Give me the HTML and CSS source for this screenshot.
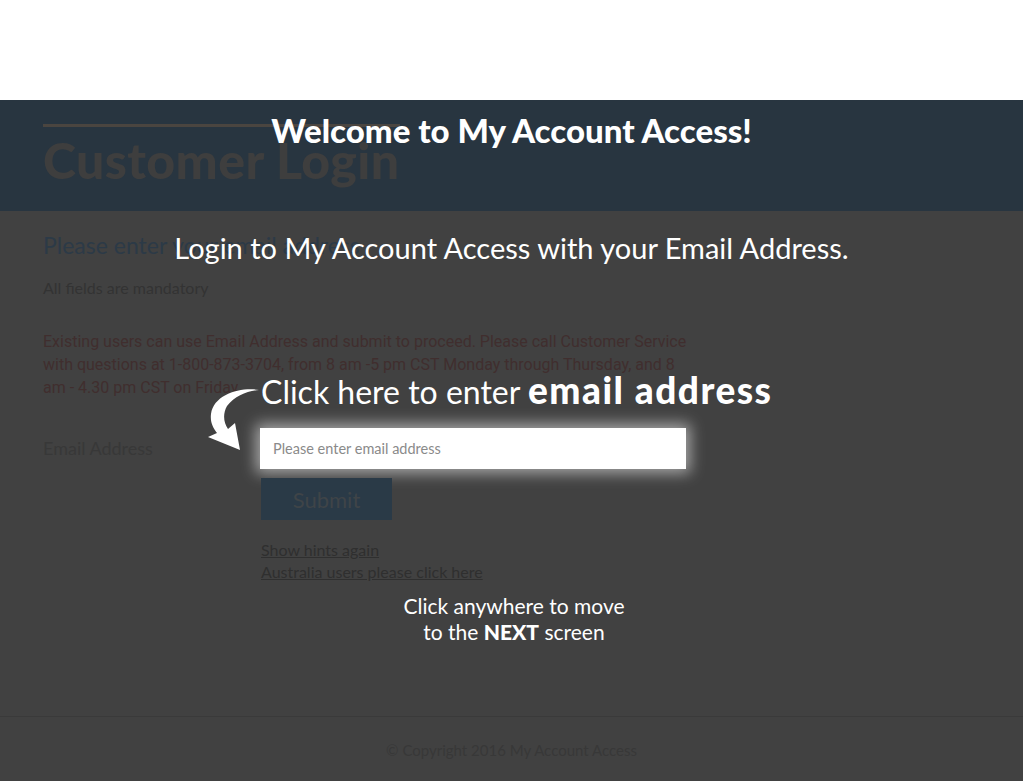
FILE: index.html
```html
<!DOCTYPE html>
<html lang="en">
<head>
  <meta charset="UTF-8">
  <meta name="viewport" content="width=device-width, initial-scale=1.0">
  <title>My Account Access - Customer Login</title>
  <link rel="stylesheet" href="styles.css">
</head>
<body>

  <div class="topbar"></div>

  <div class="hero">
    <div class="hero-line"></div>
    <h1>Customer Login</h1>
  </div>

  <div class="contenido">
    <h2>Please enter your email address</h2>
    <p class="mandatory">All fields are mandatory</p>
    <p class="info">
      Existing users can use Email Address and submit to proceed. Please call Customer Service
      with questions at 1-800-873-3704, from 8 am -5 pm CST Monday through Thursday, and 8
      am - 4.30 pm CST on Friday.
    </p>

    <form class="form-login">
      <label for="email">Email Address</label>
      <input type="text" id="email" placeholder="Please enter email address">
      <span></span>
      <button type="button" class="btn-submit">Submit</button>
      <span></span>
      <div class="links">
        <a href="#">Show hints again</a>
        <a href="#">Australia users please click here</a>
      </div>
    </form>
  </div>

  <footer class="pie">
    <p>&copy; Copyright 2016 My Account Access</p>
  </footer>

  <!-- Capa de ayudas encima de la pagina -->
  <div class="hints">
    <p class="hint-welcome">Welcome to My Account Access!</p>
    <p class="hint-login">Login to My Account Access with your Email Address.</p>
    <p class="hint-email">Click here to enter <b>email address</b></p>
    <svg class="hint-arrow" width="56" height="68" viewBox="0 0 56 68">
      <path d="M54 5 C36 2 9 9 6 29 C5 37 8 43 12 48 L3 52 L35 65 L30 38 L23 44 C18 37 18 28 22 21 C30 11 42 6 54 5 Z" fill="#fff"/>
    </svg>
    <p class="hint-next">Click anywhere to move<br>to the <b>NEXT</b> screen</p>
  </div>

</body>
</html>
```

FILE: styles.css
```css
* {
  margin: 0;
  padding: 0;
  box-sizing: border-box;
}

body {
  width: 1023px;
  height: 781px;
  background: #414141;
  font-family: 'Lato', 'Open Sans', sans-serif;
  overflow: hidden;
  position: relative;
}

.topbar {
  height: 100px;
  background: #fff;
}

.hero {
  height: 111px;
  background: #283540;
  padding: 24px 43px 0;
}

.hero-line {
  width: 357px;
  height: 3px;
  background: #4a4540;
}

.hero h1 {
  font-size: 50px;
  font-weight: 900;
  color: #3e3e3e;
  line-height: 1;
  margin-top: 8px;
  letter-spacing: 0.4px;
}

.contenido {
  padding: 0 43px;
}

.contenido h2 {
  font-size: 23px;
  font-weight: 400;
  color: #2c3a47;
  margin-top: 20px;
  line-height: 28px;
}

.mandatory {
  font-size: 16px;
  color: #333;
  margin-top: 18px;
  line-height: 22px;
}

.info {
  font-family: 'Roboto', sans-serif;
  font-size: 16px;
  color: #402e2e;
  line-height: 23px;
  margin-top: 31px;
  width: 645px;
}

.form-login {
  display: grid;
  grid-template-columns: 217px 426px;
  row-gap: 9px;
  margin-top: 29px;
  align-items: center;
}

.form-login label {
  font-size: 18px;
  color: #383838;
  margin-bottom: 2px;
}

.form-login input {
  height: 41px;
  border: none;
  background: #fff;
  padding: 0 13px;
  font-family: 'Lato', sans-serif;
  font-size: 14.5px;
  color: #333;
  box-shadow: 0 0 14px 4px rgba(255,255,255,0.55);
  outline: none;
}

.form-login input::placeholder {
  color: #8a8a8a;
}

.btn-submit {
  width: 131px;
  height: 42px;
  background: #2a3a47;
  border: none;
  color: #3f4448;
  font-family: 'Lato', sans-serif;
  font-size: 22px;
  margin-left: 1px;
}

.links {
  display: flex;
  flex-direction: column;
  margin-top: 10px;
  margin-left: 1px;
}

.links a {
  font-size: 16px;
  line-height: 22px;
  color: #2f2f2f;
}

.pie {
  position: absolute;
  left: 0;
  right: 0;
  top: 716px;
  border-top: 1px solid #3a3a3a;
  text-align: center;
  padding-top: 24px;
}

.pie p {
  font-size: 15px;
  color: #383838;
}

/* Capa de ayudas */
.hints {
  position: absolute;
  top: 0;
  left: 0;
  width: 100%;
  height: 100%;
  color: #fff;
  pointer-events: none;
}

.hints p {
  position: absolute;
}

.hint-welcome {
  top: 110px;
  left: 0;
  width: 100%;
  text-align: center;
  font-size: 33px;
  font-weight: 900;
}

.hint-login {
  top: 230px;
  left: 0;
  width: 100%;
  text-align: center;
  font-size: 29px;
}

.hint-email {
  top: 371px;
  left: 261px;
  font-size: 32px;
}

.hint-email b {
  font-size: 37px;
  font-weight: 900;
  letter-spacing: 1.5px;
  line-height: 1;
}

.hint-arrow {
  position: absolute;
  left: 205px;
  top: 385px;
}

.hint-next {
  top: 593px;
  left: 0;
  width: 1028px;
  text-align: center;
  font-size: 21px;
  line-height: 26px;
}

.hint-next b {
  font-weight: 900;
}
```
